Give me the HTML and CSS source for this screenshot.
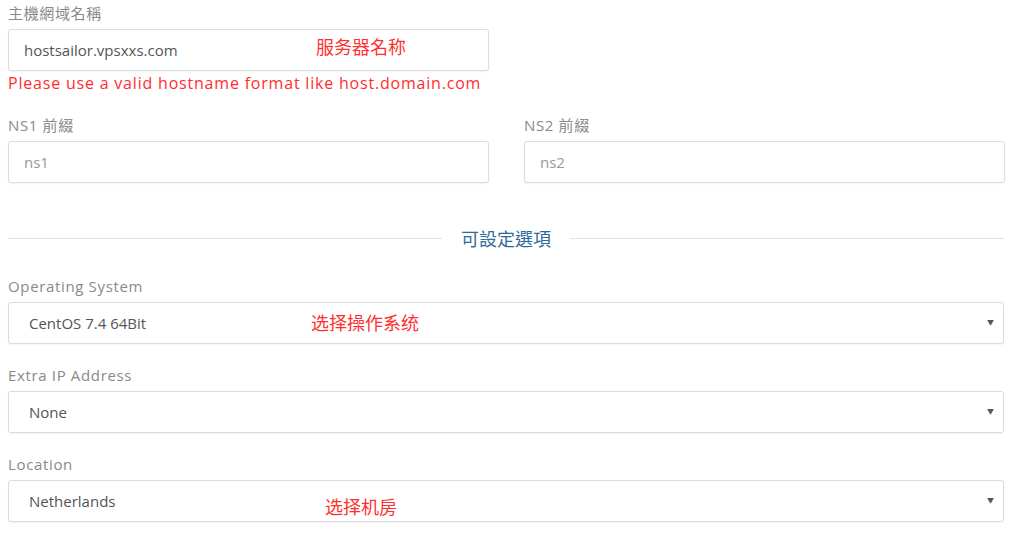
FILE: index.html
```html
<!DOCTYPE html>
<html lang="zh-Hant">
<head>
    <meta charset="UTF-8">
    <meta name="viewport" content="width=device-width, initial-scale=1.0">
    <title>Server Configuration</title>
    <link rel="stylesheet" href="styles.css">
</head>
<body>
    <div class="form">
        <!-- Hostname -->
        <div class="field">
            <label class="field-label">主機網域名稱</label>
            <div class="control">
                <input class="text-input" type="text" value="hostsailor.vpsxxs.com">
                <span class="note note-host">服务器名称</span>
            </div>
            <p class="error">Please use a valid hostname format like host.domain.com</p>
        </div>

        <!-- Nameservers -->
        <div class="row-two">
            <div class="field">
                <label class="field-label">NS1 前綴</label>
                <input class="text-input placeholder" type="text" placeholder="ns1">
            </div>
            <div class="field">
                <label class="field-label">NS2 前綴</label>
                <input class="text-input placeholder" type="text" placeholder="ns2">
            </div>
        </div>

        <!-- Section divider -->
        <div class="divider"><span>可設定選項</span></div>

        <div class="field opt">
            <label class="field-label">Operating System</label>
            <div class="control select">
                <div class="select-box">CentOS 7.4 64Bit</div>
                <span class="note note-os">选择操作系统</span>
            </div>
        </div>

        <div class="field opt">
            <label class="field-label">Extra IP Address</label>
            <div class="control select">
                <div class="select-box">None</div>
            </div>
        </div>

        <div class="field opt">
            <label class="field-label">Location</label>
            <div class="control select">
                <div class="select-box">Netherlands</div>
                <span class="note note-loc">选择机房</span>
            </div>
        </div>
    </div>
</body>
</html>
```

FILE: styles.css
```css
/* Page */
body {
    margin: 0;
    background-color: #fff;
    font-family: "Open Sans", "Noto Sans CJK TC", sans-serif;
    color: #555;
}

.form {
    width: 996px;
    padding: 3px 0 0 8px;
}

/* Labels and fields */
.field-label {
    display: block;
    height: 20px;
    line-height: 20px;
    margin-bottom: 6px;
    font-size: 15px;
    color: #8a8a8a;
    letter-spacing: 0.65px;
}

.control {
    position: relative;
}

.text-input,
.select-box {
    box-sizing: border-box;
    display: block;
    width: 100%;
    height: 42px;
    border: 1px solid #dcdcdc;
    border-radius: 3px;
    box-shadow: 0 1px 2px rgba(0, 0, 0, 0.05);
    background: #fff;
    font-family: "Open Sans", sans-serif;
    font-size: 15px;
    color: #555;
    outline: none;
}

.field > .control > .text-input,
.row-two .text-input {
    width: 481px;
}

.text-input {
    padding: 0 15px;
}

.text-input::placeholder {
    color: #999;
}

/* Select look */
.select-box {
    padding: 0 20px;
    line-height: 40px;
}

.select::after {
    content: "\25BC";
    position: absolute;
    right: 10px;
    top: 15px;
    font-size: 7px;
    color: #555;
}

.error {
    margin: 2px 0 0;
    height: 20px;
    line-height: 20px;
    font-size: 16px;
    color: #ff2d2d;
    letter-spacing: 0.8px;
}

/* Two column row */
.row-two {
    display: flex;
    gap: 35px;
    margin-top: 22px;
}

/* Divider with centered title */
.divider {
    display: flex;
    align-items: center;
    gap: 19px;
    height: 24px;
    margin: 43px 0 26px;
}

.divider::before,
.divider::after {
    content: "";
    flex: 1;
    border-top: 1px solid #e0e0e0;
}

.divider span {
    font-size: 18px;
    color: #2f6a9a;
    font-family: "Noto Sans CJK TC", sans-serif;
}

.opt {
    margin-bottom: 21px;
}

/* Red annotations drawn over the fields */
.note {
    position: absolute;
    font-family: "Noto Sans CJK SC", sans-serif;
    font-size: 18px;
    color: #ff3030;
    line-height: 24px;
}

.note-host { left: 308px; top: 5px; }
.note-os { left: 303px; top: 8px; }
.note-loc { left: 317px; top: 14px; }
```
